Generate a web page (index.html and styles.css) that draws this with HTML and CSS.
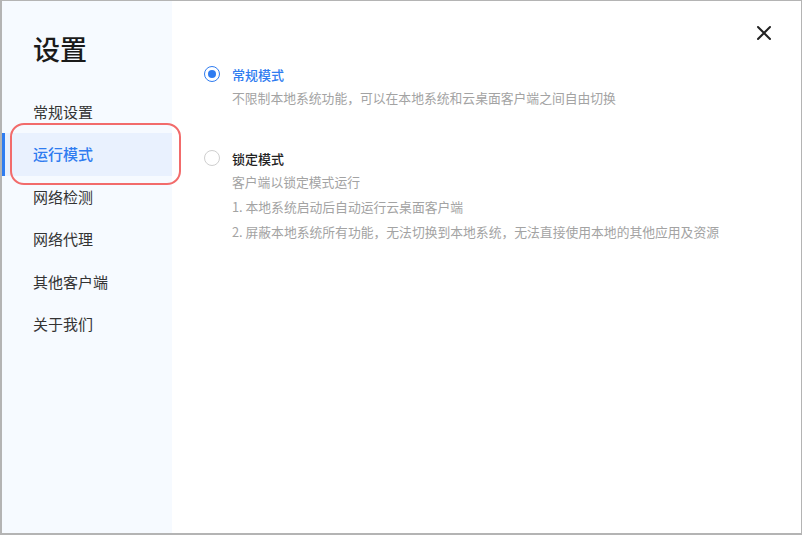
FILE: index.html
```html
<!DOCTYPE html>
<html lang="zh-CN">
<head>
    <meta charset="UTF-8">
    <title>设置</title>
    <link rel="stylesheet" href="styles.css">
</head>
<body>
<div class="dialog">
    <div class="sidebar">
        <h1 class="title">设置</h1>
        <ul class="nav">
            <li>常规设置</li>
            <li class="current">运行模式<span class="mark"></span></li>
            <li>网络检测</li>
            <li>网络代理</li>
            <li>其他客户端</li>
            <li>关于我们</li>
        </ul>
    </div>
    <div class="main">
        <span class="close">
            <svg width="16" height="16" viewBox="0 0 16 16"><path d="M2 2L14 14M14 2L2 14" stroke="#222" stroke-width="2" stroke-linecap="round"/></svg>
        </span>
        <div class="option checked">
            <div class="head"><span class="radio"></span><span class="label">常规模式</span></div>
            <p class="desc">不限制本地系统功能，可以在本地系统和云桌面客户端之间自由切换</p>
        </div>
        <div class="option">
            <div class="head"><span class="radio"></span><span class="label">锁定模式</span></div>
            <p class="desc">客户端以锁定模式运行</p>
            <p class="desc">1. 本地系统启动后自动运行云桌面客户端</p>
            <p class="desc">2. 屏蔽本地系统所有功能，无法切换到本地系统，无法直接使用本地的其他应用及资源</p>
        </div>
    </div>
</div>
</body>
</html>
```

FILE: styles.css
```css
*{
    margin: 0;
    padding: 0;
    box-sizing: border-box;
}
body{
    width: 802px;
    height: 535px;
    font-family: "Noto Sans CJK SC", "Noto Sans", sans-serif;
    background: #fff;
}
.dialog{
    width: 802px;
    height: 535px;
    border: 1px solid #b4b4b4;
    border-left-width: 2px;
    border-bottom-width: 2px;
    display: flex;
}
/*左侧菜单*/
.sidebar{
    width: 170px;
    background: #f6faff;
    padding-top: 32px;
}
.title{
    font-size: 27px;
    font-weight: 500;
    line-height: 32px;
    color: #1a1a1a;
    padding-left: 31px;
}
.nav{
    list-style: none;
    margin-top: 26px;
}
.nav li{
    height: 42.4px;
    line-height: 42px;
    padding-left: 31px;
    font-size: 15px;
    color: #333;
    position: relative;
}
.nav li.current{
    background: #e9f1fe;
    color: #2f7cf0;
    font-weight: 500;
    box-shadow: inset 3px 0 0 #2f7cf0;
}
/*红色标注框*/
.nav .mark{
    position: absolute;
    left: 8px;
    right: -9px;
    top: -10px;
    bottom: -9px;
    border: 2px solid #f26b6b;
    border-radius: 14px;
}
/*右侧内容*/
.main{
    flex: 1;
    position: relative;
    padding: 63px 0 0 32px;
}
.close{
    position: absolute;
    top: 24px;
    right: 29px;
    width: 16px;
    height: 16px;
}
.close svg{
    display: block;
}
.option{
    margin-bottom: 38px;
}
.head{
    display: flex;
    align-items: center;
    height: 20px;
}
.radio{
    width: 16px;
    height: 16px;
    border-radius: 50%;
    border: 1px solid #cfcfcf;
    margin-right: 12px;
    position: relative;
}
.checked .radio{
    border: 1.5px solid #2f7cf0;
}
.checked .radio::after{
    content: "";
    position: absolute;
    left: 2.5px;
    top: 2.5px;
    width: 8px;
    height: 8px;
    border-radius: 50%;
    background: #2f7cf0;
}
.label{
    font-size: 13px;
    font-weight: 500;
    color: #222;
}
.checked .label{
    color: #2f7cf0;
}
.desc{
    font-size: 12.8px;
    line-height: 25px;
    color: #a3a3a3;
    padding-left: 28px;
}
.option .head + .desc{
    margin-top: 1px;
}
```
